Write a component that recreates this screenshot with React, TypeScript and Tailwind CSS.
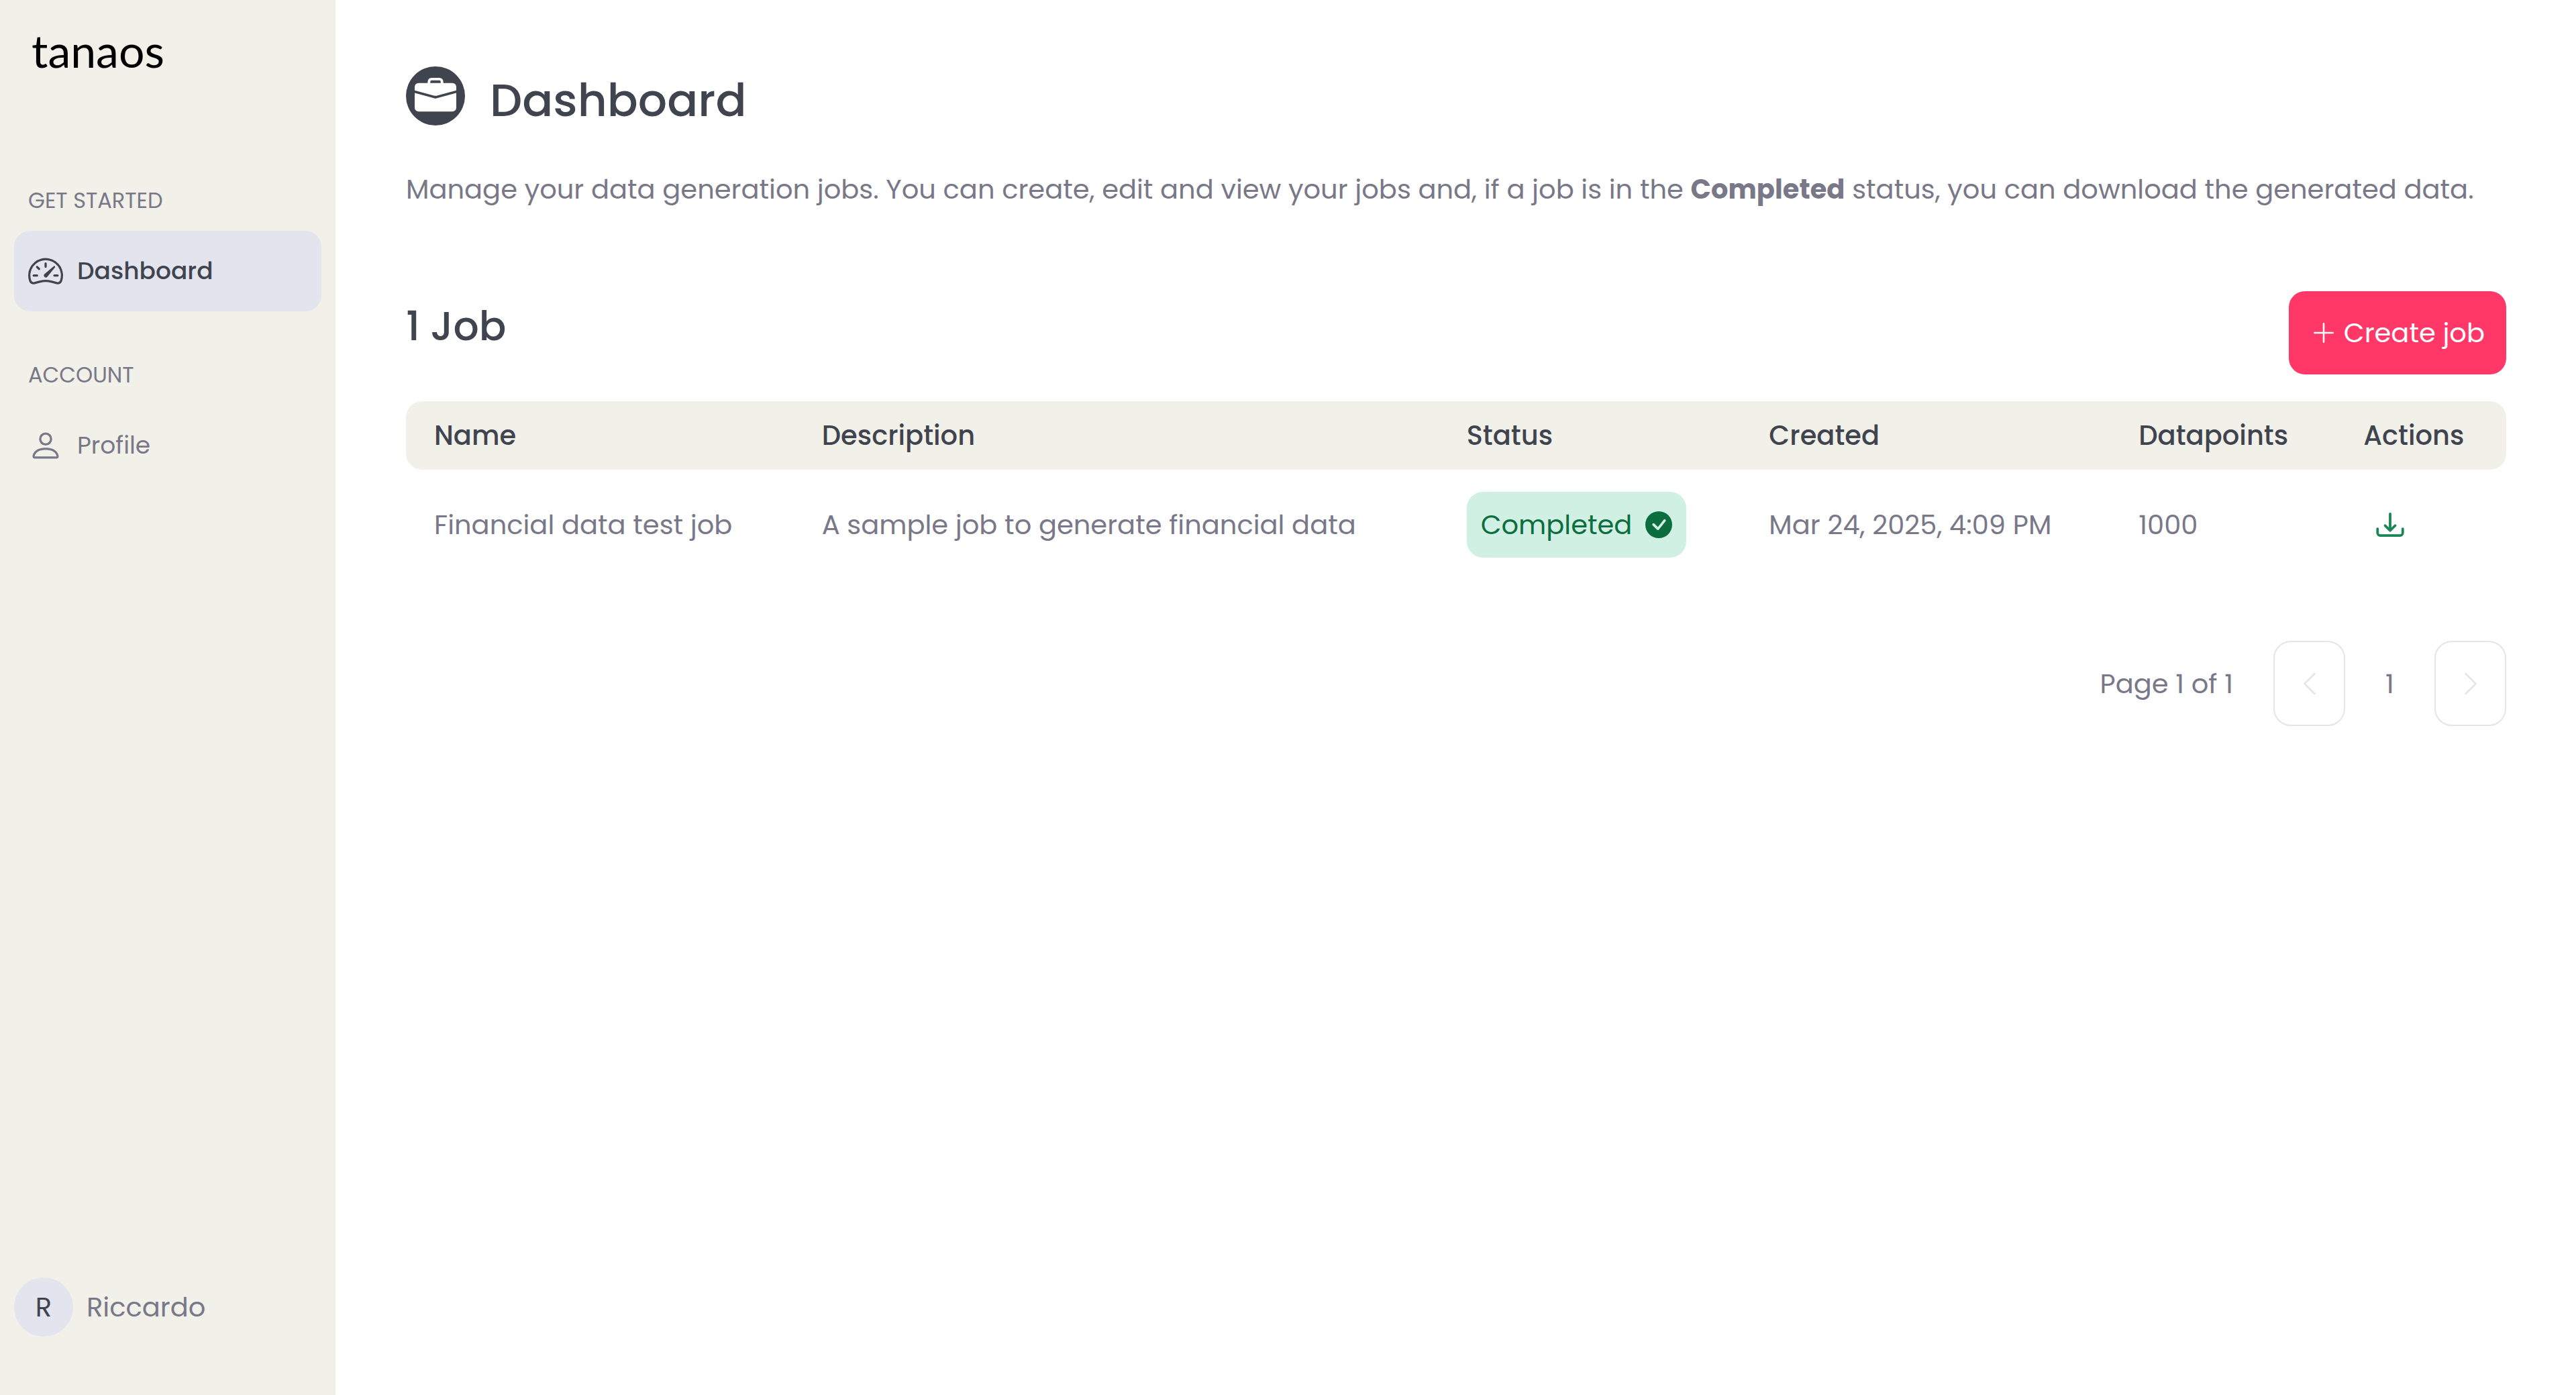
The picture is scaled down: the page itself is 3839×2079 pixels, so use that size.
import type { ReactNode } from "react";
import {
  BsBriefcaseFill,
  BsCheckCircleFill,
  BsChevronLeft,
  BsChevronRight,
  BsDownload,
  BsPerson,
  BsPlusLg,
  BsSpeedometer2,
} from "react-icons/bs";

function NavSection({ title, children }: { title: string; children: ReactNode }) {
  return (
    <section className="flex flex-col gap-[25px]">
      <h2 className="px-[21px] text-[32px] leading-[40px] uppercase">{title}</h2>
      {children}
    </section>
  );
}

function NavLink({ icon, label, active }: { icon: ReactNode; label: string; active?: boolean }) {
  return (
    <a
      href="#"
      className={
        active
          ? "flex h-[120px] items-center gap-[21px] rounded-[24px] bg-[#e4e4ee] px-[21px] text-[36px] font-medium text-[#40444f]"
          : "flex h-[120px] items-center gap-[21px] rounded-[24px] px-[21px] text-[36px]"
      }
    >
      {icon}
      {label}
    </a>
  );
}

function Sidebar() {
  return (
    <aside className="flex w-[500px] shrink-0 flex-col bg-[#f1f0e9] px-[21px] text-[#797888]">
      <a href="#" className="mt-[35px] px-[26px] font-['Lato',sans-serif] text-[68px] leading-[80px] text-black">
        tanaos
      </a>
      <nav className="mt-[164px] flex flex-col gap-[75px]">
        <NavSection title="Get started">
          <NavLink active icon={<BsSpeedometer2 size={52} />} label="Dashboard" />
        </NavSection>
        <NavSection title="Account">
          <NavLink icon={<BsPerson size={52} />} label="Profile" />
        </NavSection>
      </nav>
      <button className="mt-auto mb-[87px] flex items-center gap-[20px] text-[40px]">
        <span className="flex size-[88px] items-center justify-center rounded-full bg-[#e4e4ee] text-[#40444f]">R</span>
        Riccardo
      </button>
    </aside>
  );
}

const job = {
  name: "Financial data test job",
  description: "A sample job to generate financial data",
  status: "Completed",
  created: "Mar 24, 2025, 4:09 PM",
  datapoints: 1000,
};

function JobsTable() {
  return (
    <table className="mt-[40px] w-full table-fixed text-left text-[40px]">
      <colgroup>
        <col className="w-[19.8%]" />
        <col className="w-[30.7%]" />
        <col className="w-[14.4%]" />
        <col className="w-[17.6%]" />
        <col className="w-[10.7%]" />
        <col className="w-[6.8%]" />
      </colgroup>
      <thead className="h-[102px] bg-[#f1f0e9] text-[#40444f]">
        <tr>
          <th className="rounded-l-[24px] pl-[42px] font-medium">Name</th>
          <th className="font-medium">Description</th>
          <th className="font-medium">Status</th>
          <th className="font-medium">Created</th>
          <th className="font-medium">Datapoints</th>
          <th className="rounded-r-[24px] font-medium">Actions</th>
        </tr>
      </thead>
      <tbody>
        <tr className="h-[164px]">
          <td className="pl-[42px]">{job.name}</td>
          <td>{job.description}</td>
          <td>
            <span className="inline-flex h-[98px] items-center gap-[20px] rounded-[24px] bg-[#d0f0e4] px-[21px] align-middle text-[#0c6e3e]">
              {job.status}
              <BsCheckCircleFill size={40} />
            </span>
          </td>
          <td>{job.created}</td>
          <td>{job.datapoints}</td>
          <td>
            <button aria-label="Download" className="ml-[20px] flex text-[#198754]">
              <BsDownload size={40} stroke="currentColor" strokeWidth={0.5} className="overflow-visible" />
            </button>
          </td>
        </tr>
      </tbody>
    </table>
  );
}

function PageButton({ label, children }: { label: string; children: ReactNode }) {
  return (
    <button
      aria-label={label}
      disabled
      className="flex h-[127px] w-[107px] items-center justify-center rounded-[26px] border-2 border-[#e4e4ee] text-[#e4e4ee]"
    >
      {children}
    </button>
  );
}

export default function App() {
  return (
    <div className="flex min-h-screen bg-white font-['Poppins','Inter',sans-serif] text-[#797888]">
      <Sidebar />
      <main className="min-w-0 flex-1 pt-[86px] pr-[104px] pl-[105px]">
        <header className="flex items-center gap-[37px] text-[#40444f]">
          <span className="flex size-[88px] items-center justify-center rounded-full bg-[#40444f] text-white">
            <BsBriefcaseFill size={62} />
          </span>
          <h1 className="pt-[14px] text-[68px] leading-[100px] font-medium">Dashboard</h1>
        </header>
        <p className="mt-[52px] text-[40px] leading-[60px]">
          Manage your data generation jobs. You can create, edit and view your jobs and, if a job is in the{" "}
          <b className="font-bold">Completed</b> status, you can download the generated data.
        </p>
        <div className="mt-[122px] flex items-start justify-between">
          <h2 className="pt-[8px] text-[60px] leading-[88px] font-medium text-[#40444f]">1 Job</h2>
          <button className="flex h-[124px] items-center gap-[10px] rounded-[24px] bg-[#ff3868] px-[32px] text-[40px] text-white">
            <BsPlusLg size={40} />
            Create job
          </button>
        </div>
        <JobsTable />
        <nav aria-label="Pagination" className="mt-[91px] flex items-center justify-end text-[40px]">
          <span className="mr-[60px]">Page 1 of 1</span>
          <PageButton label="Previous page">
            <BsChevronLeft size={40} />
          </PageButton>
          <span className="w-[133px] text-center">1</span>
          <PageButton label="Next page">
            <BsChevronRight size={40} />
          </PageButton>
        </nav>
      </main>
    </div>
  );
}
